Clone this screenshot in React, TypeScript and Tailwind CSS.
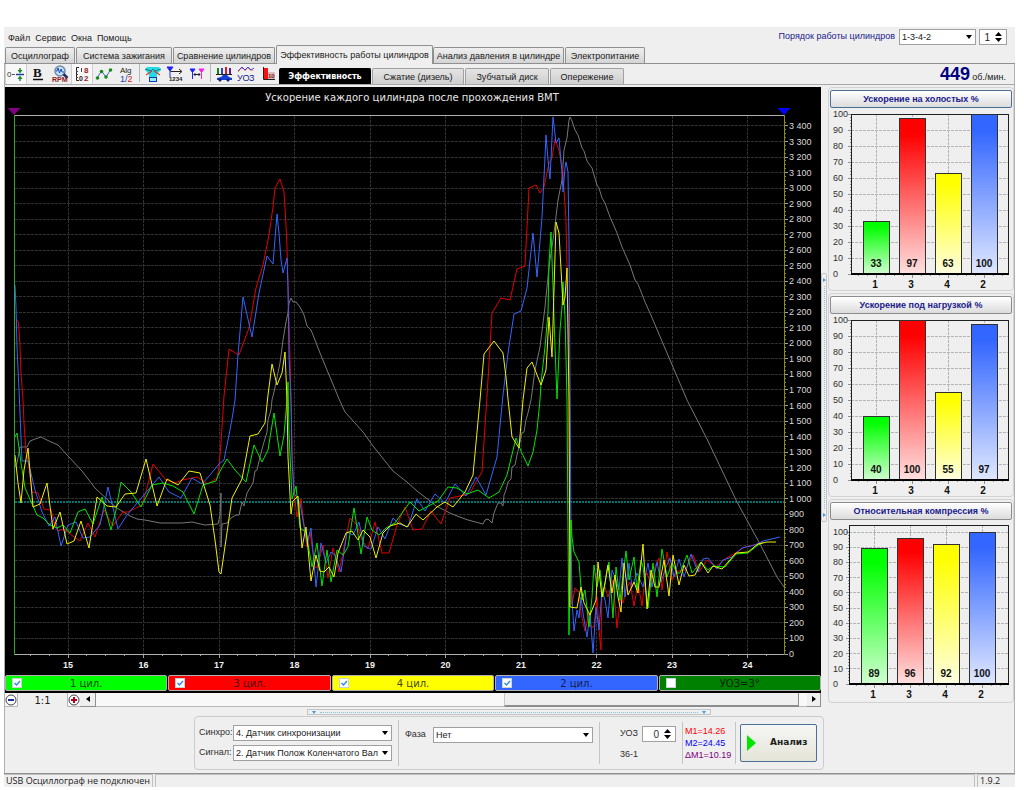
import type { ReactNode } from "react";
import clsx from "clsx";

const SANS = "font-['Liberation_Sans',sans-serif]";
const WIDE = "font-['DejaVu_Sans',sans-serif]";

const SERIES = [
  {
    id: "advance",
    color: "#777777",
    points:
      "14,468 17,463 20,447 27,447 30,441 35,439 41,437 49,441 58,445 68,456 82,471 95,488 110,502 117,508 130,516 137,519 145,520 160,523 182,523 192,522 205,525 218,524 220,515 221,493 221,547 222,524 227,523 231,518 236,515 239,515 242,502 244,506 247,493 253,483 255,471 257,470 261,453 264,442 267,432 268,420 271,410 272,400 274,392 280,363 283,340 286,322 288,313 289,303 291,298 293,302 296,302 300,307 304,315 307,326 311,330 315,340 320,353 327,370 332,382 339,399 345,412 355,423 363,432 373,446 393,471 407,482 417,491 430,501 436,506 450,513 457,516 468,520 483,524 485,520 488,519 492,523 494,513 498,503 501,503 503,506 504,495 506,490 508,482 511,479 512,467 515,465 517,455 519,447 522,433 524,432 526,420 528,413 531,400 532,393 535,370 540,347 545,307 549,267 554,233 558,200 562,180 564,150 567,138 569,120 570,117 572,121 575,130 578,135 582,148 584,151 587,161 592,168 597,185 599,188 602,198 605,203 610,217 617,233 622,247 630,265 635,280 638,284 645,302 650,313 687,400 707,439 737,502 760,544 777,577 784,587",
  },
  {
    id: "cyl3",
    color: "#e60000",
    points:
      "16,320 18,321 19,330 20,347 21,373 23,400 24,423 26,452 28,460 32,492 38,493 44,509 51,510 54,522 58,531 64,529 70,534 80,541 88,523 95,537 104,510 113,526 123,512 128,512 142,505 147,488 153,464 166,480 175,483 182,480 197,477 208,484 217,478 219,467 221,443 224,396 229,349 239,355 249,328 256,288 263,265 269,235 273,207 275,188 280,179 284,192 286,225 287,247 288,287 290,357 291,400 292,450 294,493 297,517 301,499 303,517 307,547 310,532 315,567 317,568 323,545 328,578 333,548 339,572 350,518 357,525 362,540 368,549 375,522 382,553 389,553 397,525 405,507 413,530 422,529 431,511 441,524 450,498 465,495 470,493 477,480 482,472 487,396 492,313 501,298 510,300 517,269 525,266 529,188 536,185 540,193 544,187 549,163 552,158 555,139 559,150 563,172 564,190 566,220 567,267 569,350 570,520 571,587 572,605 575,588 579,592 581,613 585,631 589,613 591,627 594,627 597,597 599,630 601,650 602,590 605,587 608,597 613,580 617,628 620,600 623,603 627,587 630,582 634,606 638,583 642,606 645,577 647,573 652,587 655,567 659,558 662,590 667,552 672,580 678,571 685,570 693,555 699,572 707,560 716,567 725,559 732,555 745,547 758,544 763,542",
  },
  {
    id: "cyl2",
    color: "#3366ff",
    points:
      "15,285 16,307 17,347 19,390 20,413 22,461 28,461 35,490 42,512 49,526 55,517 61,546 68,525 76,522 83,538 90,537 100,525 108,487 118,529 127,515 138,502 159,477 169,492 181,498 192,478 202,484 210,475 219,464 224,460 230,430 233,413 235,400 238,355 243,297 252,337 259,293 267,256 273,264 277,214 279,233 281,260 283,273 287,258 288,287 289,357 291,400 292,460 294,493 300,503 307,543 311,528 316,587 321,543 326,563 331,552 335,555 341,572 347,532 353,535 359,522 364,546 371,549 378,527 385,539 393,518 399,524 408,527 417,499 425,511 435,494 445,503 455,484 466,496 476,477 486,495 497,457 503,395 508,353 514,314 521,311 527,288 533,233 537,277 542,217 545,157 546,135 548,160 550,179 553,117 556,143 559,138 562,173 563,192 565,168 566,162 568,172 569,243 570,380 571,533 572,600 574,631 577,610 579,618 581,597 583,613 587,637 590,613 593,653 596,607 599,630 602,590 605,600 608,618 612,570 616,580 619,590 622,558 625,597 629,563 632,587 637,573 643,587 648,563 652,587 657,562 661,582 666,567 670,558 674,577 679,559 684,577 691,554 698,572 703,559 708,558 717,569 723,560 732,557 742,548 755,545 763,541 780,537",
  },
  {
    id: "cyl1",
    color: "#00e600",
    points:
      "15,437 17,433 21,463 25,488 37,515 43,518 50,525 57,528 63,525 70,533 78,512 85,509 93,524 102,497 111,530 116,510 121,482 131,492 141,507 152,485 163,483 173,486 183,492 194,514 203,485 216,481 219,473 227,459 235,470 246,482 254,445 262,462 268,450 274,413 280,456 284,435 287,400 288,382 289,433 292,499 296,486 300,528 306,532 312,567 317,543 322,586 327,550 331,582 337,550 343,555 348,547 354,508 361,554 367,517 372,530 379,535 386,528 395,523 402,513 410,502 419,511 438,501 448,487 457,488 467,494 478,490 489,498 499,492 507,475 516,438 521,451 528,466 533,452 537,430 540,400 541,383 545,347 548,313 549,263 551,232 553,287 555,347 557,399 560,330 562,307 563,282 565,317 567,400 568,533 569,635 571,520 572,537 574,552 579,562 582,600 585,590 589,627 592,597 594,565 597,587 600,570 603,597 607,570 609,562 613,618 616,567 620,600 626,551 629,580 634,557 637,590 641,560 643,567 648,608 653,563 657,597 662,549 667,577 672,563 677,573 680,573 687,555 692,573 701,562 708,570 713,566 725,567 736,554 748,553 758,545 763,543",
  },
  {
    id: "cyl4",
    color: "#f0f000",
    points:
      "15,455 18,483 21,503 24,470 28,448 31,483 33,507 40,504 47,483 53,529 60,512 67,544 74,541 81,521 89,548 97,497 107,506 116,507 125,494 136,493 146,459 157,506 167,479 178,485 189,471 200,473 210,505 215,540 219,572 221,574 232,498 242,479 250,436 258,434 265,423 268,395 272,364 277,385 282,373 285,352 287,400 288,457 291,514 293,501 298,496 302,548 306,527 311,581 316,555 320,571 324,572 329,567 334,577 338,553 346,533 352,531 358,540 363,530 370,537 376,558 383,533 390,526 400,523 407,527 416,514 423,520 437,507 445,502 453,507 465,492 473,475 480,400 484,354 494,341 503,353 506,377 508,399 512,437 519,448 523,400 527,368 532,362 541,385 546,370 549,317 552,357 554,290 556,222 559,233 563,305 565,297 567,268 569,400 570,607 577,608 581,587 584,603 590,615 596,600 598,562 602,597 605,583 608,565 612,593 615,575 618,597 621,612 624,563 628,595 634,582 638,593 643,544 647,609 651,570 655,587 659,587 664,560 669,596 673,555 679,585 684,565 689,576 695,575 701,562 708,573 713,566 722,569 736,553 748,552 758,544 767,542 776,542",
  },
];

const yFor = (value: number) => 654 - value * 0.1553;
const xFor = (angle: number) => 68 + (angle - 15) * 75.5;

const formatTick = (value: number) =>
  value >= 1000
    ? `${Math.floor(value / 1000)} ${String(value % 1000).padStart(3, "0")}`
    : String(value);

function MainChart() {
  const yTicks = Array.from({ length: 35 }, (_, i) => i * 100);
  const yMinor = Array.from({ length: 138 }, (_, i) => i * 25);
  const xTicks = Array.from({ length: 10 }, (_, i) => 15 + i);
  const xMinor = Array.from({ length: 41 }, (_, i) => 14.5 + i * 0.25).filter((x) => x < 24.5);

  return (
    <svg viewBox="5 87 816 586" className="block h-auto w-full bg-black">
      <g shapeRendering="crispEdges" stroke="#303030" strokeDasharray="3 1">
        {yTicks.slice(1).map((v) => (
          <line key={v} x1="15" x2="784" y1={yFor(v)} y2={yFor(v)} />
        ))}
        {xTicks.map((v) => (
          <line key={v} x1={xFor(v)} x2={xFor(v)} y1="116" y2="654" />
        ))}
      </g>
      <line x1="15" x2="784" y1="502" y2="502" stroke="#007070" strokeWidth="2" strokeDasharray="2 1" />
      <g fill="none" strokeWidth="1" strokeLinejoin="round">
        {SERIES.map((s) => (
          <polyline key={s.id} points={s.points} stroke={s.color} />
        ))}
      </g>
      <g shapeRendering="crispEdges">
        <line x1="14" x2="784" y1="115.5" y2="115.5" stroke="#b0b0b0" />
        <line x1="14" x2="784" y1="654.5" y2="654.5" stroke="#b0b0b0" />
        <line x1="14.5" x2="14.5" y1="115" y2="655" stroke="#2fa82f" />
        <line x1="784.5" x2="784.5" y1="115" y2="655" stroke="#8a8a20" />
        {yMinor.map((v) => (
          <line
            key={v}
            x1="785"
            x2={v % 100 === 0 ? 788 : 786}
            y1={yFor(v)}
            y2={yFor(v)}
            stroke={v % 100 === 0 ? "#a0a0a0" : "#8a8a20"}
          />
        ))}
        {xMinor.map((v) => (
          <line
            key={v}
            x1={xFor(v)}
            x2={xFor(v)}
            y1="655"
            y2={v % 1 === 0 ? 658 : 656}
            stroke="#a0a0a0"
          />
        ))}
      </g>
      <path d="M7.500 108h13l-6.500 7z" fill="#800080" />
      <path d="M777.500 108h13l-6.500 7z" fill="#0000ff" />
      <g fill="#d8d8d8" fontSize="9" fontFamily="Liberation Sans, sans-serif">
        {yTicks.map((v) => (
          <text key={v} x="789" y={yFor(v) + 3}>
            {formatTick(v)}
          </text>
        ))}
      </g>
      <g
        fill="#f0f0f0"
        fontSize="9"
        fontWeight="700"
        fontFamily="Liberation Sans, sans-serif"
        textAnchor="middle"
      >
        {xTicks.map((v) => (
          <text key={v} x={xFor(v)} y="668">
            {v}
          </text>
        ))}
      </g>
      <text
        x="412"
        y="101"
        fill="#e8e8e8"
        fontSize="10"
        fontFamily="DejaVu Sans, sans-serif"
        textAnchor="middle"
      >
        Ускорение каждого цилиндра после прохождения ВМТ
      </text>
    </svg>
  );
}

const BAR_COLORS = ["#00ff00", "#ff0000", "#ffff00", "#3366ff"];
const BAR_FADES = ["#d0ffd0", "#ffe0e0", "#ffffe0", "#e0e8ff"];
const CYLINDERS = [1, 3, 4, 2];

type BarPanelProps = {
  id: string;
  title: string;
  values: number[];
  top?: number;
  full?: number;
  bottom?: number;
  left?: number;
  focused?: boolean;
};

function BarPanel({ id, title, values, top = 5, full = 5, bottom = 165, left = 21, focused }: BarPanelProps) {
  const y = (v: number) => bottom - (v / 100) * (bottom - full);
  const bars = values.map((v, i) => ({ v, x: left + 12 + i * 36 }));
  const ticks = Array.from({ length: 11 }, (_, i) => i * 10);

  return (
    <section className="rounded-sm border border-[#d2d2d2] px-px pt-0.5">
      <button
        className={clsx(
          "mb-px block h-[18px] w-full rounded-xs border bg-linear-to-b from-white to-[#dcdcdc] text-center text-[9px] leading-4 font-bold text-[#1a1a8c]",
          SANS,
          focused ? "border-[#4a7096]" : "border-[#8c8c8c]",
        )}
      >
        {title}
      </button>
      <svg viewBox="0 0 182 181" className="block h-auto w-full">
        <defs>
          {BAR_COLORS.map((color, i) => (
            <linearGradient key={color} id={`${id}-${i}`} x1="0" x2="0" y1="0" y2="1">
              <stop offset="0.1" stopColor={color} />
              <stop offset="1" stopColor={BAR_FADES[i]} />
            </linearGradient>
          ))}
        </defs>
        <g shapeRendering="crispEdges">
          <g stroke="#b4b4b4" strokeDasharray="3 1">
            {ticks.slice(1).map((t) => (
              <line key={t} x1={left} x2="178" y1={y(t)} y2={y(t)} />
            ))}
            {bars.map((b) => (
              <line key={b.x} x1={b.x + 13} x2={b.x + 13} y1={top} y2={bottom} />
            ))}
          </g>
          <g stroke="#909090">
            {Array.from({ length: 51 }, (_, i) => i * 2).map((t) => (
              <line key={t} x1={left - (t % 10 === 0 ? 3 : 1)} x2={left} y1={y(t)} y2={y(t)} />
            ))}
            {Array.from({ length: 17 }, (_, i) => left + 7 + i * 9).map((t, i) => (
              <line key={t} x1={t} x2={t} y1={bottom} y2={bottom + (i % 4 === 2 ? 4 : 2)} />
            ))}
          </g>
          <rect x={left} y={top} width={178 - left} height={bottom - top} fill="none" stroke="#202020" />
          {bars.map((b, i) => (
            <rect
              key={b.x}
              x={b.x}
              y={y(b.v)}
              width="26"
              height={bottom - y(b.v)}
              fill={`url(#${id}-${i})`}
              stroke="#303030"
            />
          ))}
          <line x1={left} x2="179" y1={bottom} y2={bottom} stroke="#000000" strokeWidth="2" />
        </g>
        <g fontFamily="Liberation Sans, sans-serif" fill="#303030" fontSize="9">
          {ticks.map((t) => (
            <text key={t} x="3" y={y(t) + 3}>
              {t}
            </text>
          ))}
        </g>
        <g fontFamily="Liberation Sans, sans-serif" fill="#101010" fontSize="10" fontWeight="700" textAnchor="middle">
          {bars.map((b, i) => (
            <g key={b.x}>
              <text x={b.x + 13} y={bottom - 7}>
                {b.v}
              </text>
              <text x={b.x + 12} y={bottom + 14}>
                {CYLINDERS[i]}
              </text>
            </g>
          ))}
        </g>
      </svg>
    </section>
  );
}

function Caret() {
  return (
    <svg viewBox="0 0 6 4" className="pointer-events-none absolute top-1.5 right-1 h-1 w-1.5">
      <path d="M0 0h6L3 4z" />
    </svg>
  );
}

type FieldProps = { id: string; value: string; className: string };

function Picker({ id, value, className }: FieldProps) {
  return (
    <div className={clsx("relative", className)}>
      <select
        id={id}
        className="block h-4 w-full appearance-none border border-[#a0a0a0] bg-white pr-3 pl-0.5 text-[9px] leading-3 text-[#202020]"
      >
        <option>{value}</option>
      </select>
      <Caret />
    </div>
  );
}

function Spinner({ id, value, className }: FieldProps) {
  return (
    <div className={clsx("relative h-4 border border-[#a0a0a0] bg-white", className)}>
      <input
        id={id}
        aria-label={id}
        defaultValue={value}
        className="block h-3.5 w-full bg-transparent pr-4 text-right text-[10px] leading-3"
      />
      <svg viewBox="0 0 7 10" className="absolute top-0.5 right-1 h-2.5 w-[7px]">
        <path d="M3.500 0L7 4H0zM3.500 10L7 6H0z" />
      </svg>
    </div>
  );
}

function ToolIcon({ label, pressed, children }: { label: string; pressed?: boolean; children: ReactNode }) {
  return (
    <button
      aria-label={label}
      className={clsx("flex h-5 w-[22px] items-center justify-center", pressed && "border-x border-[#cfcfcf] bg-[#f8f8f8]")}
    >
      <svg viewBox="0 0 18 18" className="h-[18px] w-[18px] shrink-0" fill="none">
        {children}
      </svg>
    </button>
  );
}

function Divider() {
  return <div className="mx-0.5 h-[18px] w-px bg-[#b8b8b8]" />;
}

const ICON_FONT = "Liberation Sans, sans-serif";

function Toolbar() {
  return (
    <div className="flex">
      <ToolIcon label="Ноль" pressed>
        <text x="0" y="12" fontSize="8" fill="#333" fontFamily={ICON_FONT}>0</text>
        <path d="M5 9.500h3" stroke="#555" />
        <path d="M9 9.500h8" stroke="#1b3f9c" strokeWidth="1.500" />
        <path d="M13 3v4M13 12v4" stroke="#1f8a2e" strokeWidth="1.500" />
        <path d="M10.500 5h5l-2.500 3.500zM10.500 14h5l-2.500-3.500z" fill="#1f8a2e" />
      </ToolIcon>
      <ToolIcon label="Жирный">
        <text x="4" y="12" fontSize="13" fontWeight="700" fill="#111" fontFamily="Liberation Serif, serif">B</text>
        <path d="M4 14.500h10" stroke="#111" strokeWidth="1.500" />
      </ToolIcon>
      <ToolIcon label="Обороты">
        <circle cx="9" cy="6" r="5" fill="#bfe3fa" stroke="#7788a5" strokeWidth="1.500" />
        <path d="M5 6h1l1-3 1.500 5L10 4l1 3h2" stroke="#1f49b8" />
        <path d="M12.500 9l4 4" stroke="#1d2f63" strokeWidth="2.500" />
        <text x="1" y="17" fontSize="7" fontWeight="700" fill="#8c1c1c" fontFamily={ICON_FONT}>RPM</text>
      </ToolIcon>
      <ToolIcon label="Шкала" pressed>
        <path d="M6 2.500H3.500v13H6" stroke="#222" />
        <path d="M3 6.500h2M3 9.500h2M3 12.500h2M8.500 3v4" stroke="#444" />
        <text x="11" y="8" fontSize="8" fontWeight="700" fill="#a02020" fontFamily={ICON_FONT}>8</text>
        <text x="11" y="16" fontSize="8" fontWeight="700" fill="#a02020" fontFamily={ICON_FONT}>2</text>
        <text x="6" y="16" fontSize="7" fontWeight="700" fill="#222" fontFamily={ICON_FONT}>0</text>
      </ToolIcon>
      <ToolIcon label="График">
        <path d="M2 13l4.500-7 4.500 6 5-8" stroke="#4263d8" />
        <g fill="#178a17">
          <circle cx="2.500" cy="13" r="1.800" />
          <circle cx="6.500" cy="6.500" r="1.800" />
          <circle cx="11" cy="12" r="1.800" />
          <circle cx="15.500" cy="5" r="1.800" />
        </g>
      </ToolIcon>
      <ToolIcon label="Алгоритм">
        <text x="3" y="8" fontSize="8" fill="#222" fontFamily={ICON_FONT}>Alg</text>
        <text x="3" y="17" fontSize="9" fill="#2040b0" fontFamily={ICON_FONT}>
          1/<tspan fill="#e02020">2</tspan>
        </text>
      </ToolIcon>
      <Divider />
      <ToolIcon label="Цилиндр">
        <path d="M3 2h12l2 3-4 4v4H5V9L1 5z" fill="#20dce8" />
        <path d="M1 4l6 2 2-2 2 2 6-2" stroke="#1c7a7a" />
        <path d="M2 10l6-4M16 10l-6-4" stroke="#d03a2a" strokeWidth="1.200" />
        <path d="M5 12.500h8M5.500 12v5M12.500 12v5M5 16.500h8" stroke="#2030c0" />
        <path d="M6 13h6v3H6z" fill="#8cf4f8" />
      </ToolIcon>
      <ToolIcon label="Синхронизация">
        <path d="M1 2h6L4 6zM4 3v9" fill="#2020ff" stroke="#2020ff" />
        <path d="M4.500 6.500H15M13 4l3 2.500L13 9" stroke="#222" />
        <text x="3" y="16" fontSize="6" fontWeight="700" fill="#222" fontFamily={ICON_FONT}>1234</text>
      </ToolIcon>
      <ToolIcon label="Маркеры">
        <path d="M2 4h5L4.500 7.500zM4.500 4v10" fill="#2020ff" stroke="#2020ff" />
        <path d="M11 4h5l-2.500 3.500zM13.500 4v10" fill="#f020f0" stroke="#f020f0" />
        <path d="M6 9.500h6M7.500 8L6 9.500 7.500 11M10.500 8l1.500 1.500-1.500 1.500" stroke="#222" />
      </ToolIcon>
      <Divider />
      <ToolIcon label="Эффективность">
        <path d="M2 3h2v6H2z" fill="#18861d" />
        <path d="M6 3h2v6H6z" fill="#3040c8" />
        <path d="M10 2h2v7h-2z" fill="#d02020" />
        <path d="M14 3h2v6h-2z" fill="#5a1c90" />
        <path d="M1 9.500h16" stroke="#222" />
        <path d="M2 13l4-1 2-2h4l2 2 3 1v2H2z" fill="#1740d8" />
        <circle cx="5" cy="15" r="1.500" fill="#0a1c70" />
        <circle cx="13" cy="15" r="1.500" fill="#0a1c70" />
      </ToolIcon>
      <ToolIcon label="УОЗ">
        <path d="M1 6l4-4 3 3 3-3 3 3 3-2" stroke="#3848d8" />
        <path d="M1 7l4-4 3 3 3-3 3 3 3-2" stroke="#ff4040" strokeDasharray="1 1" />
        <text x="0" y="16" fontSize="9" fill="#182090" fontFamily={ICON_FONT}>УО</text>
        <text x="12" y="16" fontSize="9" fill="#182090" fontFamily={ICON_FONT}>З</text>
      </ToolIcon>
      <ToolIcon label="Отчёт">
        <path d="M5 3h4v11H5z" fill="#ff1010" />
        <path d="M4.500 2v12.500H16" stroke="#222" />
        <path d="M9 7h7v7H9z" fill="#d8bcbc" />
        <text x="9" y="13" fontSize="6" fontWeight="700" fill="#802020" fontFamily={ICON_FONT}>10</text>
      </ToolIcon>
    </div>
  );
}

const MAIN_TABS = [
  { label: "Осциллограф", width: "w-[70px]" },
  { label: "Система зажигания", width: "w-24" },
  { label: "Сравнение цилиндров", width: "w-[102px]" },
  { label: "Эффективность работы цилиндров", width: "w-[157px]", active: true },
  { label: "Анализ давления в цилиндре", width: "w-[131px]" },
  { label: "Электропитание", width: "w-20" },
];

const SUB_TABS = [
  { label: "Эффективность", width: "w-[92px]", active: true },
  { label: "Сжатие (дизель)", width: "w-[92px]" },
  { label: "Зубчатый диск", width: "w-[84px]" },
  { label: "Опережение", width: "w-[74px]" },
];

const LEGEND = [
  { label: "1 цил.", color: "bg-[#00ff00]", text: "text-[#004800]", checked: true },
  { label: "3 цил.", color: "bg-[#ff0000]", text: "text-[#500000]", checked: true },
  { label: "4 цил.", color: "bg-[#ffff00]", text: "text-[#484800]", checked: true },
  { label: "2 цил.", color: "bg-[#3366ff]", text: "text-[#101c50]", checked: true },
  { label: "УОЗ=3°", color: "bg-[#008000]", text: "text-[#002400]", checked: false },
];

function Legend() {
  return (
    <div className="grid grid-cols-5 gap-px bg-black py-0.5">
      {LEGEND.map((item) => (
        <label
          key={item.label}
          className={clsx(
            "relative flex h-4 items-center justify-center rounded-xs border border-[#b0b0b0] text-[10px]",
            WIDE,
            item.color,
            item.text,
          )}
        >
          <input
            type="checkbox"
            defaultChecked={item.checked}
            className="peer absolute top-0.5 left-1.5 size-2.5 appearance-none border border-[#c8d4d4] bg-white"
          />
          <svg viewBox="0 0 10 10" className="pointer-events-none absolute top-0.5 left-1.5 hidden size-2.5 peer-checked:block">
            <path d="M2.500 5l2 2L8 3" fill="none" stroke="#2f8fe8" strokeWidth="1.500" />
          </svg>
          {item.label}
        </label>
      ))}
    </div>
  );
}

function ZoomIcon({ plus }: { plus?: boolean }) {
  return (
    <svg viewBox="0 0 12 12" className="size-3">
      <circle cx="6" cy="6" r="5" fill="#fff" stroke="#444" />
      <path d={plus ? "M3 6h6M6 3v6" : "M3 6h6"} stroke={plus ? "#b00020" : "#1c2c9c"} strokeWidth="2" />
    </svg>
  );
}

function ScrollRow() {
  return (
    <div className="flex h-3.5 items-center border-b border-[#b8b8b8] bg-[#f8f8f8]">
      <button aria-label="Уменьшить">
        <ZoomIcon />
      </button>
      <div className={clsx("h-3.5 w-[51px] border-x border-[#b8b8b8] bg-[#efefef] text-center text-[10px] leading-4", WIDE)}>1:1</div>
      <button aria-label="Увеличить">
        <ZoomIcon plus />
      </button>
      <button aria-label="Влево" className="flex h-3.5 w-4 items-center justify-center border-r border-b border-[#909090] bg-[#efefef]">
        <svg viewBox="0 0 4 6" className="h-1.5 w-1">
          <path d="M4 0v6L0 3z" />
        </svg>
      </button>
      <div className="flex h-3.5 flex-1 justify-end pr-2">
        <div className="h-3.5 w-[42%] border-r border-b-2 border-l border-[#8c8c8c] border-l-[#c8c8c8] bg-[#efefef]" />
      </div>
      <button aria-label="Вправо" className="flex h-3.5 w-3.5 items-center justify-center border-r border-b border-[#909090] bg-[#efefef]">
        <svg viewBox="0 0 4 6" className="h-1.5 w-1">
          <path d="M0 0v6l4-3z" />
        </svg>
      </button>
    </div>
  );
}

function Controls() {
  return (
    <div className="ml-[189px] flex h-[54px] w-[630px] items-center rounded-sm border border-[#cccccc] pl-1 text-[9px] text-[#303030]">
      <div className="flex flex-col gap-1">
        <div className="flex items-center">
          <label htmlFor="sync" className="w-[34px]">Синхро:</label>
          <Picker id="sync" value="4.  Датчик синхронизации" className="w-[159px]" />
        </div>
        <div className="flex items-center">
          <label htmlFor="signal" className="w-[34px]">Сигнал:</label>
          <Picker id="signal" value="2.  Датчик Полож Коленчатого Вал" className="w-[159px]" />
        </div>
      </div>
      <div className="ml-1.5 h-[46px] w-px bg-[#c4c4c4]" />
      <div className="ml-1.5 flex items-center self-start pt-2.5">
        <label htmlFor="phase" className="w-7">Фаза</label>
        <Picker id="phase" value="Нет" className="w-40" />
      </div>
      <div className="ml-1.5 h-[42px] w-px bg-[#c4c4c4]" />
      <div className="ml-5 flex flex-col gap-1.5">
        <div className="flex items-center">
          <label htmlFor="advance" className="w-[22px]">УОЗ</label>
          <Spinner id="advance" value="0" className="w-[34px]" />
        </div>
        <span className="leading-3">36-1</span>
      </div>
      <div className="ml-1.5 h-[42px] w-px bg-[#c4c4c4]" />
      <div className="ml-0.5 flex w-[50px] flex-col leading-3 whitespace-nowrap">
        <span className="text-[#ff0000]">M1=14.26</span>
        <span className="text-[#0000ff]">M2=24.45</span>
        <span className="text-[#800080]">ΔM1=10.19</span>
      </div>
      <div className="h-[42px] w-px bg-[#c4c4c4]" />
      <button
        className={clsx(
          "ml-1 flex h-[38px] w-[77px] items-center rounded-xs border border-[#4a7096] bg-linear-to-b from-[#f6f6f6] to-[#e4e4d8] text-[9px] font-bold text-[#202020]",
          WIDE,
        )}
      >
        <svg viewBox="0 0 9 16" className="mr-3.5 ml-1.5 h-4 w-[9px]">
          <path d="M0 0l9 8-9 8z" fill="#00e600" />
        </svg>
        Анализ
      </button>
    </div>
  );
}

export default function App() {
  return (
    <div className="min-h-screen bg-white pt-[27px] pr-[9px] pb-1 pl-1">
      <div className={clsx("bg-[#efefef] text-[9px] text-[#202020]", SANS)}>
        <header className="flex h-[19px] items-start justify-between pr-2 pl-1">
          <nav className="flex gap-[5px] pt-1 leading-[14px]">
            <a href="#file">Файл</a>
            <a href="#service">Сервис</a>
            <a href="#windows">Окна</a>
            <a href="#help">Помощь</a>
          </nav>
          <div className="flex items-center pt-0.5">
            <label htmlFor="order" className="mr-1 text-[#1a1a8c]">
              Порядок работы цилиндров
            </label>
            <Picker id="order" value="1-3-4-2" className="mr-[3px] w-[77px]" />
            <Spinner id="count" value="1" className="w-7" />
          </div>
        </header>

        <div role="tablist" className="flex h-[18px] items-end border-b border-[#909090] pl-px">
          {MAIN_TABS.map((tab) => (
            <button
              key={tab.label}
              role="tab"
              aria-selected={!!tab.active}
              className={clsx(
                "rounded-t-xs border border-b-0 border-[#909090] text-center leading-4 whitespace-nowrap",
                tab.width,
                tab.active
                  ? "-mb-px h-[19px] bg-[#efefef]"
                  : "mr-px h-4 bg-linear-to-b from-[#efefef] to-[#d4d4d4]",
              )}
            >
              {tab.label}
            </button>
          ))}
        </div>

        <div className="border-x border-[#b0b0b0]">
          <div className="flex h-[21px] items-end justify-between border-b border-[#a8a8a8] pr-2">
            <div className="flex items-end">
              <Toolbar />
              <div role="tablist" className="flex items-end gap-px">
                {SUB_TABS.map((tab) => (
                  <button
                    key={tab.label}
                    role="tab"
                    aria-selected={!!tab.active}
                    className={clsx(
                      "h-4 rounded-t-xs border border-b-0 text-center leading-[14px] whitespace-nowrap",
                      tab.width,
                      tab.active
                        ? "border-black bg-black text-[8px] font-bold text-white font-['DejaVu_Sans',sans-serif]"
                        : "border-[#a0a0a0] bg-linear-to-b from-[#e4e4e4] to-[#cfcfcf]",
                    )}
                  >
                    {tab.label}
                  </button>
                ))}
              </div>
            </div>
            <div className="flex items-baseline gap-0.5">
              <span className="text-[18px] leading-5 font-bold text-[#000080]">449</span>
              <span>об./мин.</span>
            </div>
          </div>

          <main className="flex pt-0.5">
            <div className="min-w-0 flex-1">
              <MainChart />
              <Legend />
              <ScrollRow />
            </div>
            <div className="flex w-[7px] items-center">
              <div className="flex h-[249px] w-1.5 flex-col items-center justify-between rounded-xs border border-[#c4c4c4] py-1">
                <svg viewBox="0 0 3 4" className="h-1 w-[3px]">
                  <path d="M0 0v4l3-2z" fill="#3f9be8" />
                </svg>
                <div className="my-1 flex-1 border-l border-dotted border-[#8cc0ee]" />
                <svg viewBox="0 0 3 4" className="h-1 w-[3px]">
                  <path d="M0 0v4l3-2z" fill="#3f9be8" />
                </svg>
              </div>
            </div>
            <aside className="flex w-[186px] flex-col gap-0.5">
              <BarPanel id="idle" title="Ускорение на холостых %" values={[33, 97, 63, 100]} focused />
              <BarPanel id="load" title="Ускорение под нагрузкой %" values={[40, 100, 55, 97]} />
              <BarPanel
                id="compression"
                title="Относительная компрессия %"
                values={[89, 96, 92, 100]}
                top={4}
                full={11}
                bottom={163}
                left={19}
              />
            </aside>
          </main>

          <div className="pt-0.5 pb-[3px]">
            <div className="mb-px ml-[302px] flex h-1.5 w-[404px] items-center border border-[#c4c4c4] px-1">
              <svg viewBox="0 0 4 3" className="h-[3px] w-1">
                <path d="M0 0h4L2 3z" fill="#3f9be8" />
              </svg>
              <div className="mx-1 flex-1 border-t border-dotted border-[#8cc0ee]" />
              <svg viewBox="0 0 4 3" className="h-[3px] w-1">
                <path d="M0 0h4L2 3z" fill="#3f9be8" />
              </svg>
            </div>
            <Controls />
          </div>
        </div>

        <footer className="flex h-3.5 gap-0.5 border-t border-[#909090] leading-3 font-['Open_Sans',sans-serif]">
          <div className="w-[149px] border-t border-r border-[#c0c0c0] pl-0.5 whitespace-nowrap">
            USB Осциллограф не подключен
          </div>
          <div className="flex-1 border-x border-t border-[#c0c0c0]" />
          <div className="w-[38px] border-t border-l border-[#c0c0c0] pl-0.5">1.9.2</div>
        </footer>
      </div>
    </div>
  );
}
